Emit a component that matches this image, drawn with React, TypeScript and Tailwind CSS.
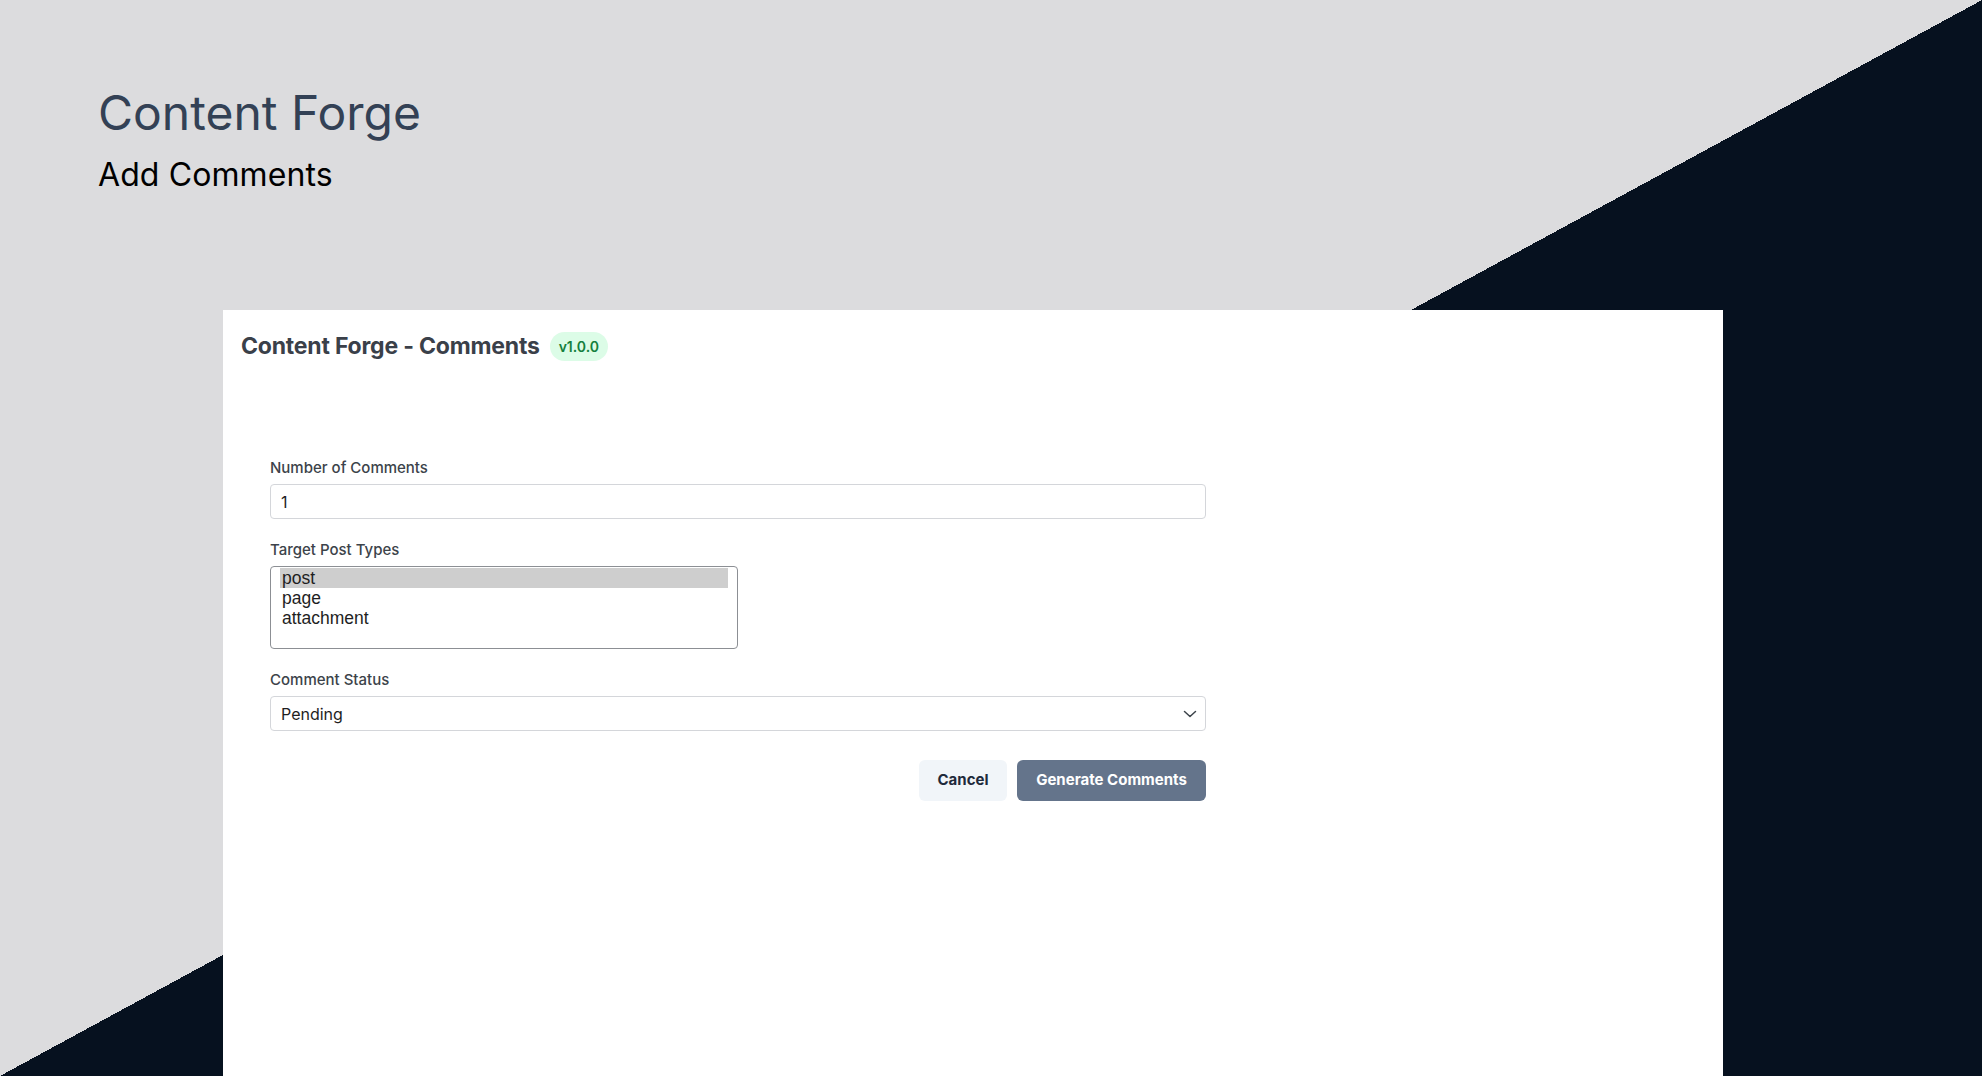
import React from "react";

export default function App() {
  return (
    <div
      className="h-screen w-full overflow-hidden flex flex-col bg-[linear-gradient(to_bottom_right,#dcdcde_50%,#06111f_50%)] font-['Inter',sans-serif]"
    >
      <header className="pl-[98px] pt-[89px]">
        <h1 className="text-[48px] leading-[48px] font-normal text-[#334155]">Content Forge</h1>
        <h2 className="mt-[20px] text-[32px] leading-[36px] font-normal text-black tracking-[0.1px]">Add Comments</h2>
      </header>

      <main className="ml-[223px] mt-[117px] w-[1500px] flex-1 bg-white pl-[18px] pt-[22px]">
        <div className="flex items-center gap-[10px]">
          <h3 className="text-[23px] leading-[29px] font-bold text-[#3a4049] tracking-[-0.2px]">Content Forge - Comments</h3>
          <span className="h-[29px] px-[9px] rounded-full bg-[#dcfce7] text-[#15803d] text-[14px] font-semibold flex items-center">
            v1.0.0
          </span>
        </div>

        <form className="ml-[29px] mt-[97px] w-[936px] flex flex-col" onSubmit={(e) => e.preventDefault()}>
          <label className="block text-[15px] leading-[20px] font-medium text-[#3c434a] mb-[6px]">Number of Comments</label>
          <div className="h-[35px] border border-[#d4d6da] rounded-[4px] pl-[10px] flex items-center text-[16px] text-[#1e1e1e]">
            1
          </div>

          <label className="block mt-[21px] text-[15px] leading-[20px] font-medium text-[#3c434a] mb-[6px]">Target Post Types</label>
          <div className="w-[468px] h-[83px] border border-[#8c8f94] rounded-[4px] px-[9px] pt-[1px] font-['Liberation_Sans',Arial,sans-serif] text-[17.5px] leading-[20px] text-[#1e1e1e]">
            <div className="bg-[#cecece] pl-[2px] h-[20px]">post</div>
            <div className="pl-[2px] h-[20px]">page</div>
            <div className="pl-[2px] h-[20px]">attachment</div>
          </div>

          <label className="block mt-[21px] text-[15px] leading-[20px] font-medium text-[#3c434a] mb-[6px]">Comment Status</label>
          <div className="h-[35px] border border-[#d4d6da] rounded-[4px] pl-[10px] pr-[8px] flex items-center justify-between text-[16px] text-[#1e1e1e]">
            <span>Pending</span>
            <svg width="14" height="8" viewBox="0 0 14 8" fill="none">
              <path d="M1.5 1.5l5.5 5 5.5-5" stroke="#3c434a" strokeWidth="1.5" strokeLinecap="round" strokeLinejoin="round" />
            </svg>
          </div>

          <div className="mt-[29px] flex justify-end gap-[10px]">
            <button type="button" className="h-[41px] w-[88px] rounded-[6px] bg-[#f1f5f9] text-[#1e293b] text-[15px] font-bold">
              Cancel
            </button>
            <button type="submit" className="h-[41px] w-[189px] rounded-[6px] bg-[#64748b] text-white text-[15px] font-bold">
              Generate Comments
            </button>
          </div>
        </form>
      </main>
    </div>
  );
}
